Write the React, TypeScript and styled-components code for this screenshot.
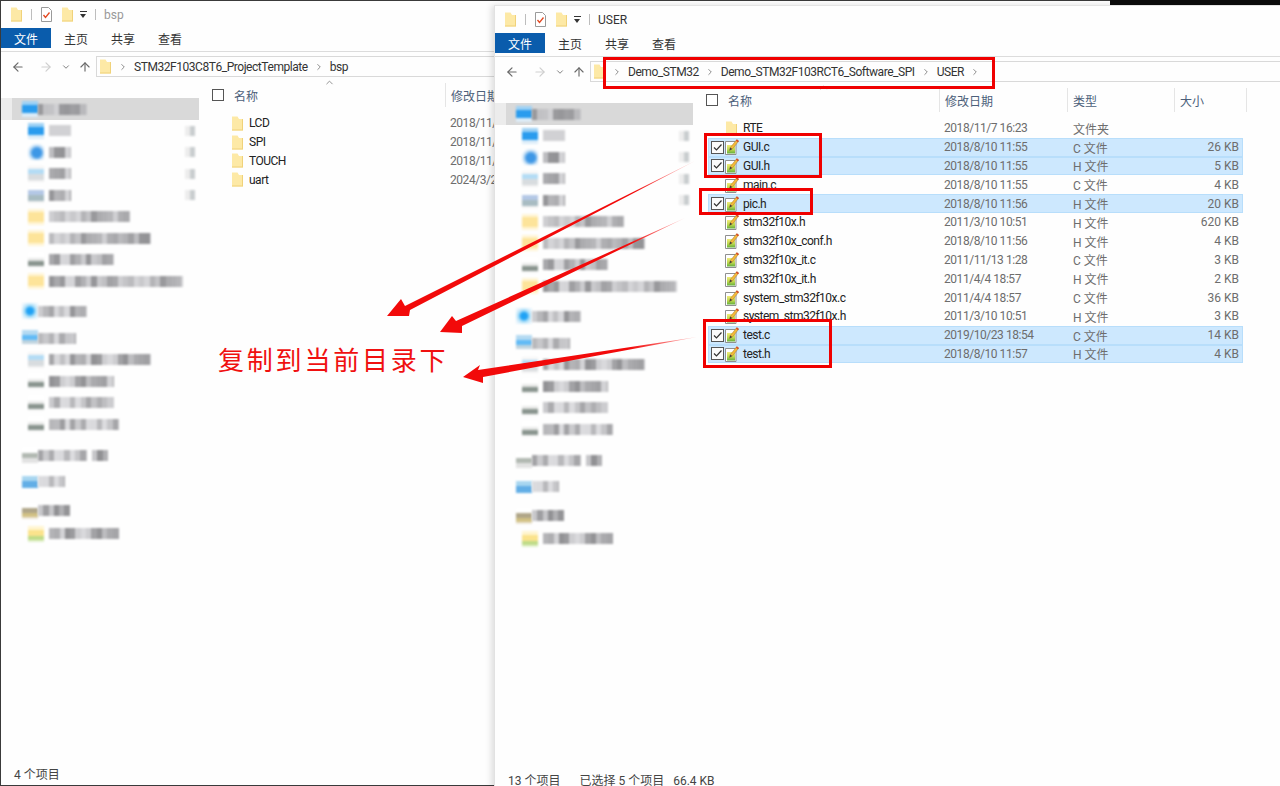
import React from 'react'
import styled, { createGlobalStyle } from 'styled-components'
import { ArrowLeft, ArrowRight, ArrowUp, ChevronDown, ChevronRight, ChevronUp } from 'lucide-react'

/**
 * ------------------------ DATA ------------------------------
 */
type IconKind = 'blue' | 'cross' | 'doc' | 'pic' | 'yellow' | 'drive' | 'net' | 'cloud' | 'pc' | 'grey' | 'user' | 'lib'

interface NavItem {
  kind: IconKind
  width: number
  level: 0 | 1
  gap?: number
  pin?: boolean
  active?: boolean
  extra?: number
}

const navItems: NavItem[] = [
  { kind: 'blue', width: 49, level: 0, active: true },
  { kind: 'blue', width: 22, level: 1, pin: true },
  { kind: 'cross', width: 22, level: 1, pin: true },
  { kind: 'doc', width: 22, level: 1, pin: true },
  { kind: 'pic', width: 22, level: 1, pin: true },
  { kind: 'yellow', width: 81, level: 1 },
  { kind: 'yellow', width: 102, level: 1 },
  { kind: 'drive', width: 65, level: 1 },
  { kind: 'yellow', width: 134, level: 1 },
  { kind: 'net', width: 49, level: 0, gap: 8.5 },
  { kind: 'cloud', width: 38, level: 0, gap: 5.5 },
  { kind: 'doc', width: 102, level: 1 },
  { kind: 'drive', width: 65, level: 1 },
  { kind: 'drive', width: 65, level: 1 },
  { kind: 'drive', width: 70, level: 1 },
  { kind: 'grey', width: 49, level: 0, gap: 9.5, extra: 16 },
  { kind: 'pc', width: 27, level: 0, gap: 5 },
  { kind: 'user', width: 32, level: 0, gap: 7.5 },
  { kind: 'lib', width: 70, level: 1, gap: 1.5 },
]

interface FileRow {
  name: string
  date: string
  type: string
  size: string
  folder?: boolean
  selected?: boolean
}

const bspFiles: FileRow[] = [
  { name: 'LCD', date: '2018/11/7 16:23', type: '文件夹', size: '', folder: true },
  { name: 'SPI', date: '2018/11/7 16:23', type: '文件夹', size: '', folder: true },
  { name: 'TOUCH', date: '2018/11/7 16:23', type: '文件夹', size: '', folder: true },
  { name: 'uart', date: '2024/3/25 10:12', type: '文件夹', size: '', folder: true },
]

const userFiles: FileRow[] = [
  { name: 'RTE', date: '2018/11/7 16:23', type: '文件夹', size: '', folder: true },
  { name: 'GUI.c', date: '2018/8/10 11:55', type: 'C 文件', size: '26 KB', selected: true },
  { name: 'GUI.h', date: '2018/8/10 11:55', type: 'H 文件', size: '5 KB', selected: true },
  { name: 'main.c', date: '2018/8/10 11:55', type: 'C 文件', size: '4 KB' },
  { name: 'pic.h', date: '2018/8/10 11:56', type: 'H 文件', size: '20 KB', selected: true },
  { name: 'stm32f10x.h', date: '2011/3/10 10:51', type: 'H 文件', size: '620 KB' },
  { name: 'stm32f10x_conf.h', date: '2018/8/10 11:56', type: 'H 文件', size: '4 KB' },
  { name: 'stm32f10x_it.c', date: '2011/11/13 1:28', type: 'C 文件', size: '3 KB' },
  { name: 'stm32f10x_it.h', date: '2011/4/4 18:57', type: 'H 文件', size: '2 KB' },
  { name: 'system_stm32f10x.c', date: '2011/4/4 18:57', type: 'C 文件', size: '36 KB' },
  { name: 'system_stm32f10x.h', date: '2011/3/10 10:51', type: 'H 文件', size: '3 KB' },
  { name: 'test.c', date: '2019/10/23 18:54', type: 'C 文件', size: '14 KB', selected: true },
  { name: 'test.h', date: '2018/8/10 11:57', type: 'H 文件', size: '4 KB', selected: true },
]

const iconFills: Record<IconKind, string> = {
  blue: 'linear-gradient(#9ed2f5 0 25%, #2a9cee 25% 75%, #dcedf9 75%)',
  cross: 'radial-gradient(circle at 55% 55%, #3d97e6 0 35%, #c6e0f6 58%, #fff 80%)',
  doc: 'linear-gradient(#f6f6f6 0 20%, #b4dcf5 20% 50%, #d8dcdf 50% 85%, #f2f2f2 85%)',
  pic: 'linear-gradient(#ffffff 0 20%, #b4c8e6 20% 50%, #a8bcc2 50% 85%, #f2f2f2 85%)',
  yellow: 'linear-gradient(#fff5d6 0 20%, #fde49a 20% 80%, #fff5d6 80%)',
  drive: 'linear-gradient(#ffffff 0 40%, #e8e9e8 40% 55%, #8a958f 55% 85%, #f6f6f6 85%)',
  net: 'radial-gradient(circle at 50% 50%, #1fa2f5 0 28%, #aee0f8 50%, #e9f5fd 80%)',
  cloud: 'linear-gradient(#b4daf2 0 30%, #62bbf6 30% 60%, #c0d4df 60% 85%, #fff 85%)',
  grey: 'linear-gradient(#ffffff 0 40%, #b2b9b2 40% 70%, #e2e2e2 70%)',
  pc: 'linear-gradient(#ffffff 0 12%, #a8d6f0 12% 45%, #62aee6 45% 85%, #fff 85%)',
  user: 'linear-gradient(#ffffff 0 30%, #b0a688 30% 62%, #d2c184 62% 85%, #ece6d6 85%)',
  lib: 'linear-gradient(#fff5d0 0 25%, #fbe38c 25% 60%, #bfdb88 60% 85%, #e2f1cd 85%)',
}

// the sidebar text is pixelated in the picture, so a strip of greys stands in for it
const mosaic = (seed: number, width: number) => {
  const stops: string[] = []
  let v = seed * 37 + 11
  for (let x = 0; x < width; x += 5.3) {
    v = (v * 73 + 41) % 101
    const g = 145 + Math.round((v / 100) * 75)
    stops.push(`rgb(${g},${g},${g + 3}) ${x}px ${x + 5.3}px`)
  }
  return `linear-gradient(90deg, ${stops.join(', ')})`
}

/**
 * ------------------------- STYLES -------------------------------
 */
const GlobalStyle = createGlobalStyle`
  html, body {
    margin: 0;
    padding: 0;
    background: #111;
  }
  * {
    box-sizing: border-box;
  }
`

const Desktop = styled.div`
  position: relative;
  width: 1280px;
  height: 786px;
  overflow: hidden;
  background: #0c0c0c;
  font-family: Roboto, 'Noto Sans CJK SC', sans-serif;
  font-size: 12px;
  color: #222;
`

// Windows on the desktop
const Win = styled.section<{ $front?: boolean }>`
  position: absolute;
  left: ${p => (p.$front ? '494px' : '0')};
  top: ${p => (p.$front ? '5px' : '0')};
  width: ${p => (p.$front ? '786px' : '1110px')};
  height: ${p => (p.$front ? '787px' : '786px')};
  display: flex;
  flex-direction: column;
  overflow: hidden;
  background: #fefefe;
  border-top: 1px solid ${p => (p.$front ? '#e4e4e4' : '#3a3a3a')};
  border-left: 1px solid ${p => (p.$front ? '#e2e2e2' : '#3a3a3a')};
  border-bottom: 1px solid #3a3a3a;
  box-shadow: ${p => (p.$front ? '-3px 0 6px rgba(0, 0, 0, 0.12)' : 'none')};
`

const QuickBar = styled.div`
  height: 27px;
  flex: none;
  display: flex;
  align-items: center;
  gap: 8px;
  padding-left: 9px;
`

const QuickSep = styled.span`
  width: 1px;
  height: 11px;
  background: #bdbdbd;
`

const QuickDrop = styled.span`
  width: 7px;
  height: 7px;
  margin-left: -2px;
  border-top: 1.5px solid #333;
  position: relative;
  &::after {
    content: '';
    position: absolute;
    left: 0;
    top: 2px;
    border: 3.5px solid transparent;
    border-top: 4px solid #333;
  }
`

const Title = styled.span<{ $dim?: boolean }>`
  color: ${p => (p.$dim ? '#999' : '#333')};
  font-size: 12px;
`

const Ribbon = styled.nav`
  height: 24px;
  flex: none;
  display: flex;
  border-bottom: 1px solid #dcdcdc;
  padding-bottom: 3px;
`

const FileTab = styled.div`
  width: 50px;
  background: #0a5cac;
  color: #fff;
  display: flex;
  align-items: center;
  justify-content: center;
  margin-right: 13px;
`

const RibbonTab = styled.div`
  width: 47px;
  display: flex;
  align-items: center;
  color: #333;
`

const AddressRow = styled.div`
  height: 27px;
  flex: none;
  display: flex;
  align-items: flex-start;
  padding: 4px 0 0 10px;
`

const NavArrows = styled.div`
  width: 85px;
  height: 21px;
  flex: none;
  display: flex;
  align-items: center;
`

const NavBtn = styled.span<{ $off?: boolean; $w: number }>`
  width: ${p => p.$w}px;
  display: flex;
  color: ${p => (p.$off ? '#cfcfcf' : '#6a6a6a')};
`

const AddressBox = styled.div`
  flex: 1;
  height: 21px;
  display: flex;
  align-items: center;
  gap: 6px;
  padding-left: 2px;
  border: 1px solid #d9d9d9;
  border-right: none;
  white-space: nowrap;
`

const Crumb = styled.span`
  color: #333;
  letter-spacing: -0.45px;
`

const CrumbArrow = styled.span`
  display: flex;
  color: #777;
`

const Body = styled.div`
  flex: 1;
  min-height: 0;
  display: flex;
`

// Navigation pane
const Sidebar = styled.aside`
  width: 198px;
  flex: none;
  padding-top: 19px;
`

const SideRow = styled.div<{ $level: number; $active?: boolean; $gap?: number }>`
  height: 21.5px;
  margin-top: ${p => p.$gap || 0}px;
  display: flex;
  align-items: center;
  padding-left: ${p => (p.$level ? 27 : 21)}px;
  ${p => p.$active && `background: linear-gradient(90deg, #ececec 0 11px, #d9d9d9 11px); height: 22px;`}
`

const SideIcon = styled.span<{ $kind: IconKind; $level: number }>`
  width: 16px;
  height: 16px;
  flex: none;
  margin-right: ${p => (p.$level ? 5 : 0)}px;
  background: ${p => iconFills[p.$kind]};
  filter: blur(1px);
`

const SideText = styled.span`
  height: 11px;
  flex: none;
  filter: blur(1px);
`

const SidePin = styled.span`
  width: 10px;
  height: 10px;
  margin-left: auto;
  margin-right: 4px;
  background: linear-gradient(90deg, #ededed 0 50%, #c9cdcf 50%);
  filter: blur(1px);
`

// File list
const Main = styled.main`
  flex: 1;
  min-width: 0;
  padding-top: 4px;
`

const HeadRow = styled.div`
  height: 24px;
  display: flex;
  color: #4c607a;
  margin-bottom: 7px;
`

const HeadName = styled.div`
  width: 246px;
  flex: none;
  display: flex;
  align-items: center;
  gap: 10px;
  padding-left: 13px;
  position: relative;
`

const SortCaret = styled.span`
  position: absolute;
  right: 110px;
  top: -6px;
  display: flex;
  color: #8a8a8a;
`

const HeadCol = styled.div<{ $w: number }>`
  width: ${p => p.$w}px;
  flex: none;
  display: flex;
  align-items: center;
  padding-left: 5px;
  border-left: 1px solid #e5e5e5;
`

const HeadEnd = styled.div`
  width: 1px;
  background: #e5e5e5;
`

const HeadBox = styled.span`
  width: 12px;
  height: 12px;
  border: 1px solid #555;
  background: #fff;
`

const FileList = styled.div`
  margin-left: 15px;
  width: 535px;
`

const Row = styled.div<{ $selected?: boolean }>`
  height: 18.8px;
  display: grid;
  grid-template-columns: 236px 129px 100px 1fr;
  align-items: center;
  color: #6d6d6d;
  white-space: nowrap;
  ${p => p.$selected && `background: #cde8fe; box-shadow: inset 0 0 0 1px #b8defb;`}
`

const NameCell = styled.div`
  display: flex;
  align-items: center;
  padding-left: 3px;
  height: 100%;
`

const NameText = styled.span`
  color: #222;
  margin-left: 4px;
  letter-spacing: -0.5px;
`

const RowCheck = styled.span<{ $on?: boolean }>`
  width: 13px;
  height: 13px;
  flex: none;
  margin-right: 1px;
  display: flex;
  ${p => p.$on && `border: 1px solid #555; background: #fbfbfb;`}
`

const IconSlot = styled.span`
  width: 14px;
  flex: none;
  display: flex;
`

const DateCell = styled.div`
  letter-spacing: -0.45px;
`

const SizeCell = styled.div`
  text-align: right;
  padding-right: 4px;
`

const StatusBar = styled.footer`
  height: 21px;
  flex: none;
  display: flex;
  align-items: center;
  padding-left: 13px;
  color: #444;
  line-height: 12px;
`

const StatusItem = styled.span<{ $gap?: number }>`
  margin-right: ${p => p.$gap || 0}px;
`

// Annotations drawn over the screenshot
const Marks = styled.svg`
  position: absolute;
  left: 0;
  top: 0;
  pointer-events: none;
`

const RedBox = styled.div<{ $x: number; $y: number; $w: number; $h: number }>`
  position: absolute;
  left: ${p => p.$x}px;
  top: ${p => p.$y}px;
  width: ${p => p.$w}px;
  height: ${p => p.$h}px;
  border: 3px solid #f00000;
`

const Note = styled.div`
  position: absolute;
  left: 218px;
  top: 341px;
  color: #f01010;
  font-size: 26px;
  font-weight: 400;
  letter-spacing: 2.8px;
  line-height: 36px;
  white-space: nowrap;
  font-family: 'Noto Sans CJK SC', sans-serif;
`

/**
 * ----------------------- ICONS -------------------------------
 */
const FolderIcon = () => (
  <svg width="13" height="15" viewBox="0 0 13 15">
    <path d="M1 .5h5.500l1.500 2.500h4v11.500H1z" fill="#fde9a6" />
    <path d="M12 3v11.500H1v-1h10V3z" fill="#f0d27a" />
  </svg>
)

const TaskIcon = () => (
  <svg width="13" height="15" viewBox="0 0 13 15">
    <path d="M1.500.5h7l3 3v11h-10z" fill="#fff" stroke="#9a9a9a" />
    <path d="M3.500 8l2 2.500 4-5" fill="none" stroke="#e2461f" strokeWidth="1.300" />
  </svg>
)

const SourceIcon = () => (
  <svg width="14" height="16" viewBox="0 0 14 16">
    <defs>
      <linearGradient id="srcFill" x1="0" y1="0" x2="0" y2="1">
        <stop offset="0" stopColor="#f2ec7a" />
        <stop offset="0.55" stopColor="#bcd84e" />
        <stop offset="1" stopColor="#63ad3c" />
      </linearGradient>
    </defs>
    <path d="M.5 2.500h10.500v13H.5z" fill="#fff" stroke="#8f8f8f" />
    <path d="M2 6h8v8.500H2z" fill="url(#srcFill)" />
    <path d="M4.500 11.500l.8-3L11.800.6l2 1.500-6.500 8z" fill="#f5b93a" stroke="#8a6a2a" strokeWidth=".4" />
    <path d="M4.500 11.500l.8-3 1.900 1.500z" fill="#3a3a3a" />
    <path d="M11.800.6l2 1.500-.9 1.100-2-1.500z" fill="#d9432a" />
  </svg>
)

const CheckMark = () => (
  <svg width="11" height="11" viewBox="0 0 11 11">
    <path d="M2 5.500l2.500 2.500L9.500 2.500" fill="none" stroke="#333" strokeWidth="1.200" />
  </svg>
)

/**
 * ----------------------- COMPONENT -------------------------------
 */
const Nav = () => (
  <Sidebar>
    {navItems.map((item, i) => (
      <SideRow key={i} $level={item.level} $active={item.active} $gap={item.gap}>
        <SideIcon $kind={item.kind} $level={item.level} />
        <SideText style={{ width: item.width, background: mosaic(i + 1, item.width) }} />
        {item.extra && (
          <SideText style={{ width: item.extra, marginLeft: 5, background: mosaic(i + 7, item.extra) }} />
        )}
        {item.pin && <SidePin />}
      </SideRow>
    ))}
  </Sidebar>
)

const Files = ({ rows }: { rows: FileRow[] }) => (
  <Main>
    <HeadRow>
      <HeadName>
        <HeadBox />
        <span>名称</span>
        <SortCaret>
          <ChevronUp size={11} />
        </SortCaret>
      </HeadName>
      <HeadCol $w={128}>修改日期</HeadCol>
      <HeadCol $w={107}>类型</HeadCol>
      <HeadCol $w={72}>大小</HeadCol>
      <HeadEnd />
    </HeadRow>
    <FileList>
      {rows.map(f => (
        <Row key={f.name} $selected={f.selected}>
          <NameCell>
            <RowCheck $on={f.selected}>{f.selected && <CheckMark />}</RowCheck>
            <IconSlot>{f.folder ? <FolderIcon /> : <SourceIcon />}</IconSlot>
            <NameText>{f.name}</NameText>
          </NameCell>
          <DateCell>{f.date}</DateCell>
          <div>{f.type}</div>
          <SizeCell>{f.size}</SizeCell>
        </Row>
      ))}
    </FileList>
  </Main>
)

const Explorer = ({
  front,
  crumbs,
  rows,
  title,
  children,
}: {
  front?: boolean
  crumbs: string[]
  rows: FileRow[]
  title: string
  children: React.ReactNode
}) => (
  <Win $front={front}>
    <QuickBar>
      <FolderIcon />
      <QuickSep />
      <TaskIcon />
      <FolderIcon />
      <QuickDrop />
      <QuickSep />
      <Title $dim={!front}>{title}</Title>
    </QuickBar>
    <Ribbon>
      <FileTab>文件</FileTab>
      <RibbonTab>主页</RibbonTab>
      <RibbonTab>共享</RibbonTab>
      <RibbonTab>查看</RibbonTab>
    </Ribbon>
    <AddressRow>
      <NavArrows>
        <NavBtn $w={28}>
          <ArrowLeft size={14} />
        </NavBtn>
        <NavBtn $w={22} $off>
          <ArrowRight size={14} />
        </NavBtn>
        <NavBtn $w={17}>
          <ChevronDown size={10} />
        </NavBtn>
        <NavBtn $w={14}>
          <ArrowUp size={14} />
        </NavBtn>
      </NavArrows>
      <AddressBox>
        <FolderIcon />
        {crumbs.map(c => (
          <React.Fragment key={c}>
            <CrumbArrow>
              <ChevronRight size={10} />
            </CrumbArrow>
            <Crumb>{c}</Crumb>
          </React.Fragment>
        ))}
        {front && (
          <CrumbArrow>
            <ChevronRight size={10} />
          </CrumbArrow>
        )}
      </AddressBox>
    </AddressRow>
    <Body>
      <Nav />
      <Files rows={rows} />
    </Body>
    <StatusBar>{children}</StatusBar>
  </Win>
)

const App: React.FC = () => (
  <Desktop>
    <GlobalStyle />
    <Explorer title="bsp" crumbs={['STM32F103C8T6_ProjectTemplate', 'bsp']} rows={bspFiles}>
      <StatusItem>4 个项目</StatusItem>
    </Explorer>
    <Explorer front title="USER" crumbs={['Demo_STM32', 'Demo_STM32F103RCT6_Software_SPI', 'USER']} rows={userFiles}>
      <StatusItem $gap={19}>13 个项目</StatusItem>
      <StatusItem $gap={9}>已选择 5 个项目</StatusItem>
      <StatusItem>66.4 KB</StatusItem>
    </Explorer>

    <RedBox $x={603} $y={57} $w={392} $h={32} />
    <RedBox $x={704} $y={133} $w={118} $h={45} />
    <RedBox $x={699} $y={188} $w={114} $h={27} />
    <RedBox $x={703} $y={319} $w={129} $h={49} />

    <Marks width="1280" height="786" viewBox="0 0 1280 786">
      <defs>
        <linearGradient id="fadeA" gradientUnits="userSpaceOnUse" x1="695" y1="161" x2="635" y2="190">
          <stop offset="0" stopColor="#ffc4c4" />
          <stop offset="1" stopColor="#f20a0a" />
        </linearGradient>
        <linearGradient id="fadeB" gradientUnits="userSpaceOnUse" x1="685" y1="218" x2="630" y2="244">
          <stop offset="0" stopColor="#ffc4c4" />
          <stop offset="1" stopColor="#f20a0a" />
        </linearGradient>
        <linearGradient id="fadeC" gradientUnits="userSpaceOnUse" x1="697" y1="337" x2="630" y2="348">
          <stop offset="0" stopColor="#ffc4c4" />
          <stop offset="1" stopColor="#f20a0a" />
        </linearGradient>
      </defs>
      <polygon points="695,161 405,306 401,299 387,316 409,316 410,310" fill="url(#fadeA)" />
      <polygon points="685,218 456,321 452,316 440,332 462,333 462,326" fill="url(#fadeB)" />
      <polygon points="697,337 478,370 480,365 463,377 483,383 483,377" fill="url(#fadeC)" />
    </Marks>
    <Note>复制到当前目录下</Note>
  </Desktop>
)

export default App
